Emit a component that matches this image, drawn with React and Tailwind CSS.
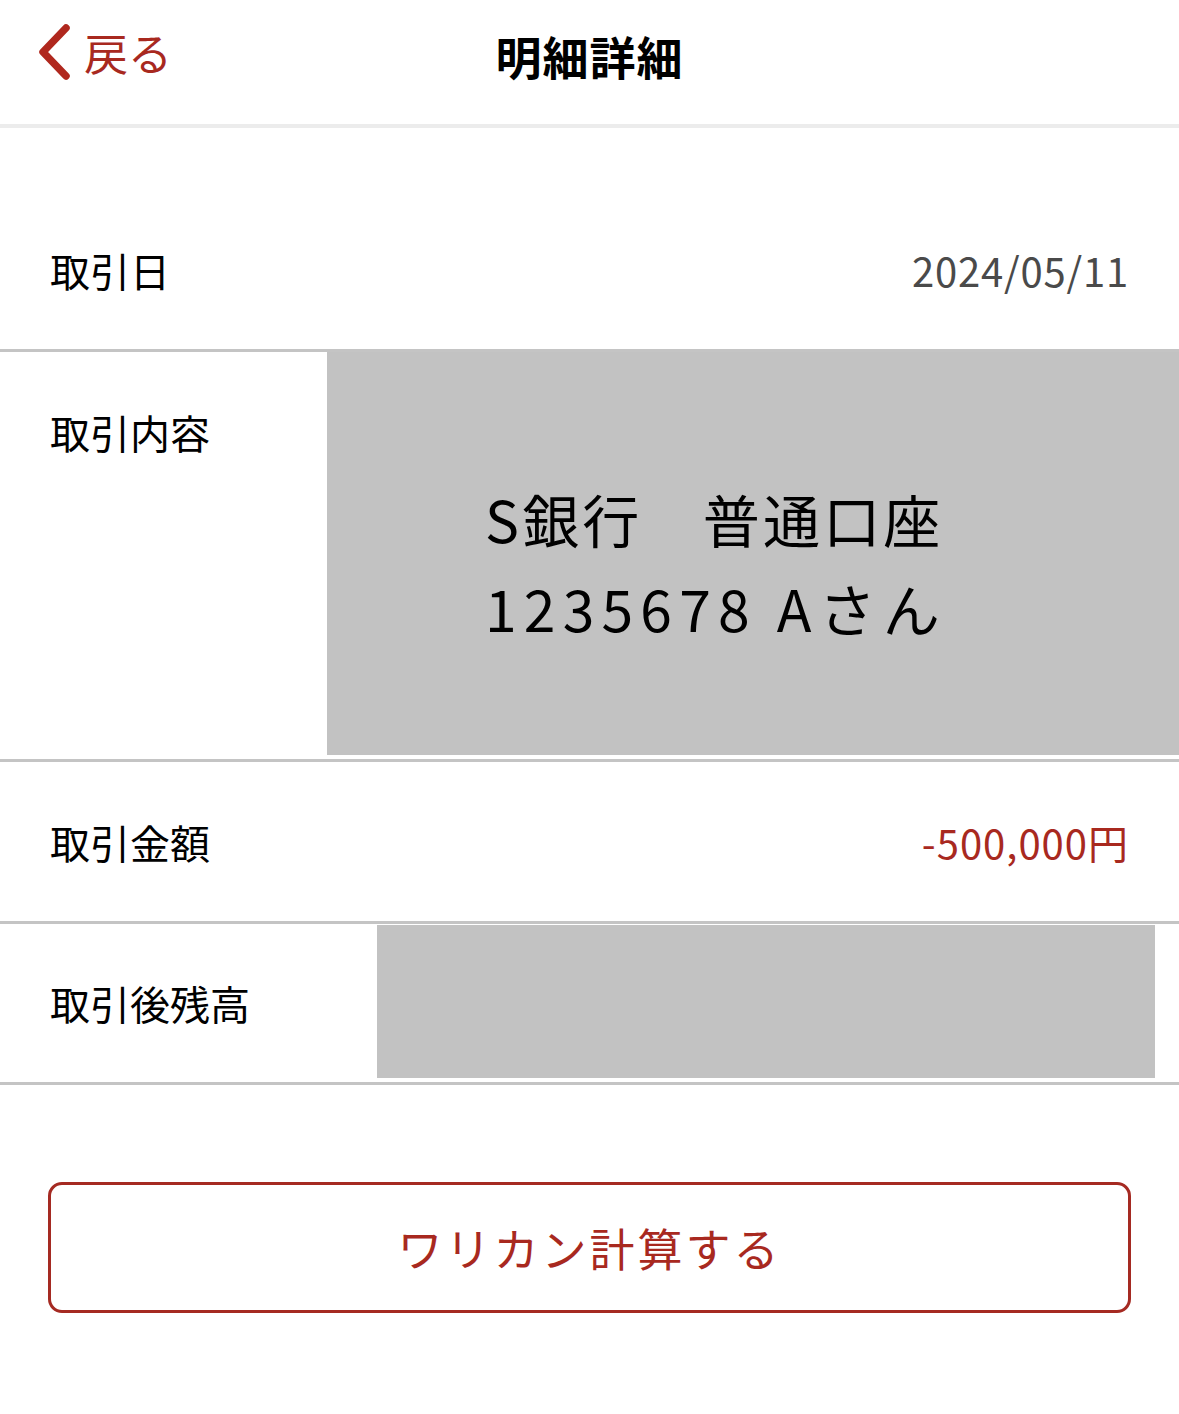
import React from "react";

const jp = { fontFamily: '"Noto Sans CJK JP", "Noto Sans", sans-serif' };

const Divider = () => <div className="h-[3px] bg-[#c4c4c4]" />;

export default function App() {
  return (
    <div className="w-[1179px] h-[1414px] bg-white text-black" style={jp}>
      <header className="relative h-[124px] flex items-center justify-center">
        <button className="absolute left-[36px] top-[24px] flex items-center gap-[12px] text-[#a8291f]">
          <svg width="36" height="56" viewBox="0 0 36 56" fill="none">
            <path d="M30 4 L7 28 L30 52" stroke="#b0281e" strokeWidth="7.5" strokeLinecap="round" strokeLinejoin="round" />
          </svg>
          <span className="text-[44px] leading-none">戻る</span>
        </button>
        <h1 className="text-[46px] font-bold leading-none -mt-[14px] tracking-[1px]">明細詳細</h1>
      </header>
      <div className="h-[4px] bg-[#ececec]" />

      <div className="h-[72px]" />

      <div className="h-[149px] flex items-center justify-between px-[50px] pb-[10px]">
        <span className="text-[40px] leading-none">取引日</span>
        <span className="text-[40px] leading-none text-[#4a4a4a] tracking-[0.8px]">2024/05/11</span>
      </div>
      <Divider />

      <div className="h-[407px] flex">
        <div className="w-[327px] pl-[50px] pt-[60px]">
          <span className="text-[40px] leading-none">取引内容</span>
        </div>
        <div className="flex-1 h-[403px] bg-[#c2c2c2] flex flex-col justify-center pl-[158px] pt-[18px]">
          <div className="text-[57px] leading-[89px] tracking-[3.2px]">S銀行　普通口座</div>
          <div className="text-[57px] leading-[89px] tracking-[7.2px]">1235678 Aさん</div>
        </div>
      </div>
      <Divider />

      <div className="h-[159px] flex items-center justify-between px-[50px]">
        <span className="text-[40px] leading-none">取引金額</span>
        <span className="text-[40px] leading-none text-[#a8291f] tracking-[1px]">-500,000円</span>
      </div>
      <Divider />

      <div className="h-[158px] flex">
        <div className="w-[377px] pl-[50px] flex items-center">
          <span className="text-[40px] leading-none">取引後残高</span>
        </div>
        <div className="w-[778px] h-[153px] mt-[1px] bg-[#c2c2c2]" />
      </div>
      <Divider />

      <div className="px-[48px] pt-[97px]">
        <button className="w-full h-[131px] border-[3px] border-[#a52a22] rounded-[14px] flex items-center justify-center text-[#a8291f] text-[45px] leading-none tracking-[3px]">
          ワリカン計算する
        </button>
      </div>
    </div>
  );
}
